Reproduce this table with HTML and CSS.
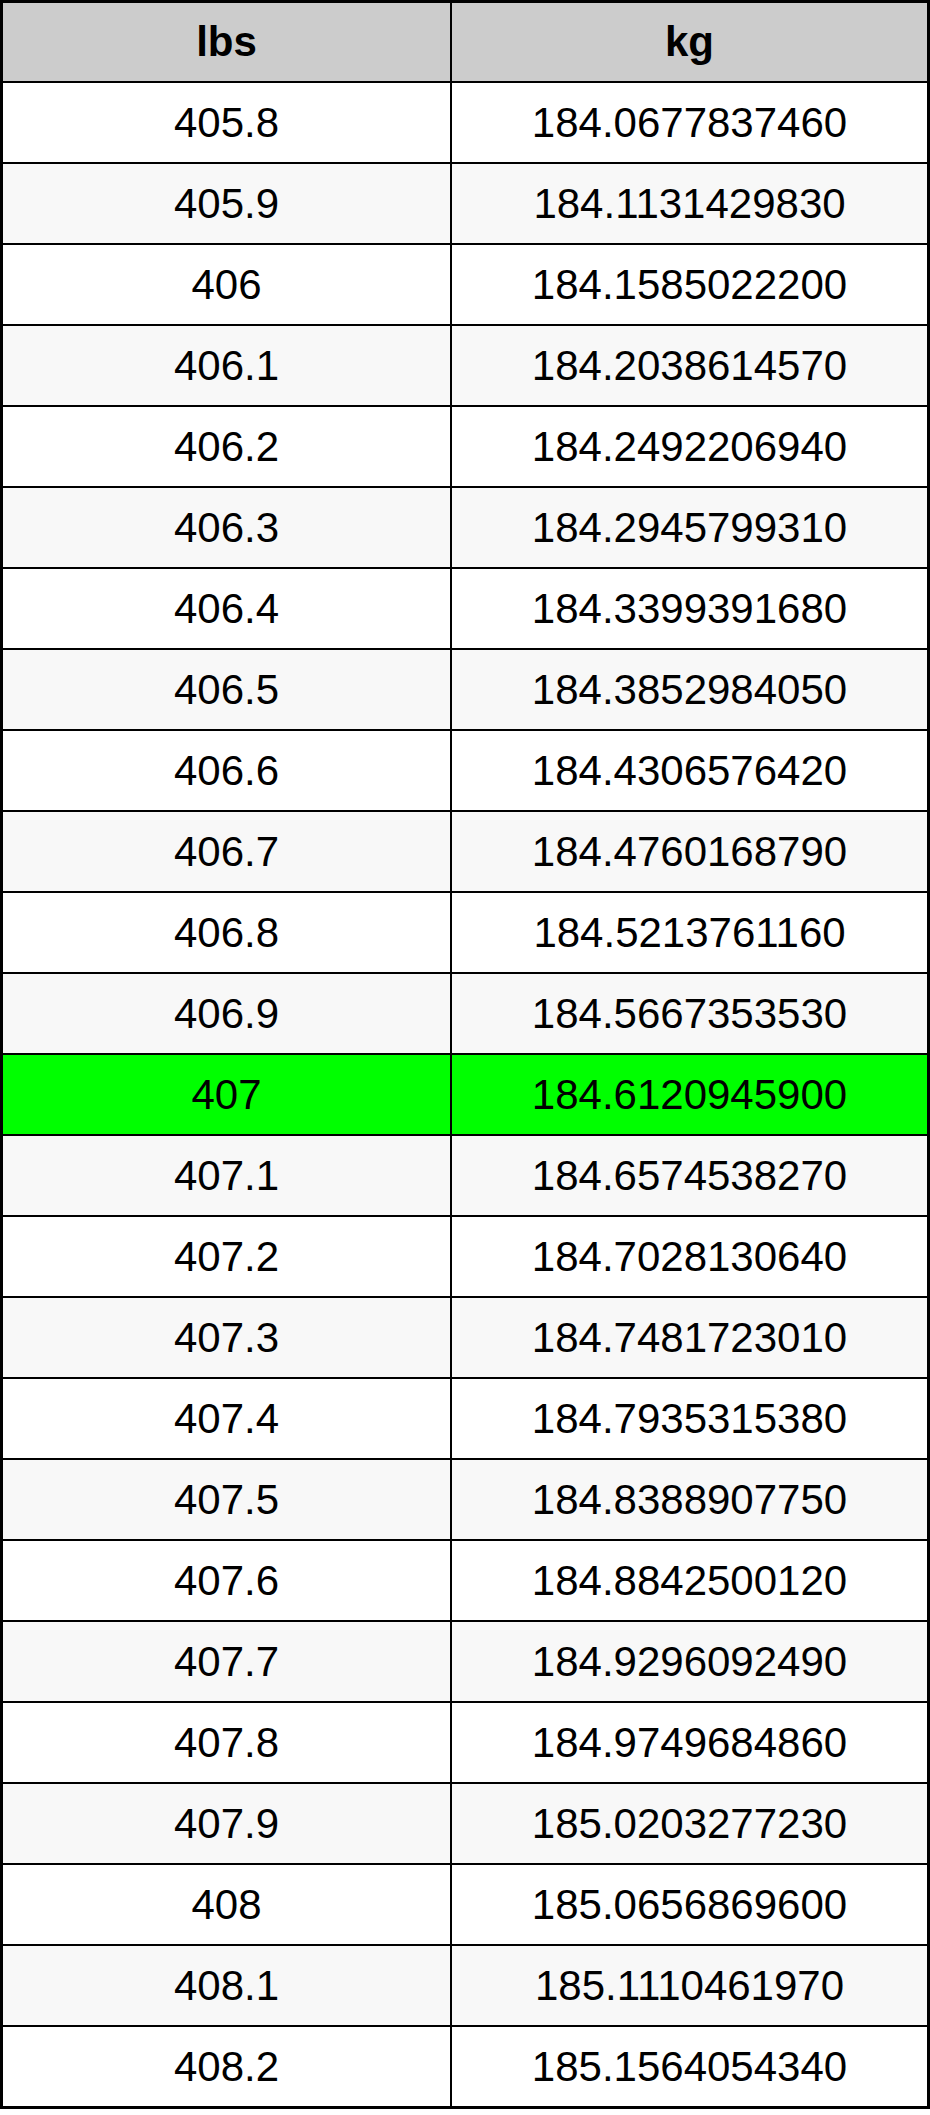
FILE: index.html
```html
<!DOCTYPE html>
<html>
<head>
<meta charset="utf-8">
<link rel="stylesheet" href="styles.css">
</head>
<body>
<div class="table">
  <div class="cell head">lbs</div><div class="cell head">kg</div>
  <div class="cell">405.8</div><div class="cell">184.0677837460</div>
  <div class="cell alt">405.9</div><div class="cell alt">184.1131429830</div>
  <div class="cell">406</div><div class="cell">184.1585022200</div>
  <div class="cell alt">406.1</div><div class="cell alt">184.2038614570</div>
  <div class="cell">406.2</div><div class="cell">184.2492206940</div>
  <div class="cell alt">406.3</div><div class="cell alt">184.2945799310</div>
  <div class="cell">406.4</div><div class="cell">184.3399391680</div>
  <div class="cell alt">406.5</div><div class="cell alt">184.3852984050</div>
  <div class="cell">406.6</div><div class="cell">184.4306576420</div>
  <div class="cell alt">406.7</div><div class="cell alt">184.4760168790</div>
  <div class="cell">406.8</div><div class="cell">184.5213761160</div>
  <div class="cell alt">406.9</div><div class="cell alt">184.5667353530</div>
  <div class="cell hl">407</div><div class="cell hl">184.6120945900</div>
  <div class="cell alt">407.1</div><div class="cell alt">184.6574538270</div>
  <div class="cell">407.2</div><div class="cell">184.7028130640</div>
  <div class="cell alt">407.3</div><div class="cell alt">184.7481723010</div>
  <div class="cell">407.4</div><div class="cell">184.7935315380</div>
  <div class="cell alt">407.5</div><div class="cell alt">184.8388907750</div>
  <div class="cell">407.6</div><div class="cell">184.8842500120</div>
  <div class="cell alt">407.7</div><div class="cell alt">184.9296092490</div>
  <div class="cell">407.8</div><div class="cell">184.9749684860</div>
  <div class="cell alt">407.9</div><div class="cell alt">185.0203277230</div>
  <div class="cell">408</div><div class="cell">185.0656869600</div>
  <div class="cell alt">408.1</div><div class="cell alt">185.1110461970</div>
  <div class="cell">408.2</div><div class="cell">185.1564054340</div>
</div>
</body>
</html>
```

FILE: styles.css
```css
html, body {
  margin: 0;
  padding: 0;
  background: #ffffff;
}

.table {
  display: grid;
  grid-template-columns: 447px 475px;
  grid-template-rows: 78px repeat(25, 79px);
  gap: 2px;
  padding: 3px;
  background: #000000;
  width: 930px;
  box-sizing: border-box;
  font-family: "Liberation Sans", Arial, sans-serif;
  font-size: 42px;
  color: #000000;
}

.cell {
  display: flex;
  align-items: center;
  justify-content: center;
  background: #ffffff;
}

.cell.alt {
  background: #f8f8f8;
}

.cell.head {
  background: #cccccc;
  font-weight: bold;
}

.cell.hl {
  background: #00ff00;
}
```
